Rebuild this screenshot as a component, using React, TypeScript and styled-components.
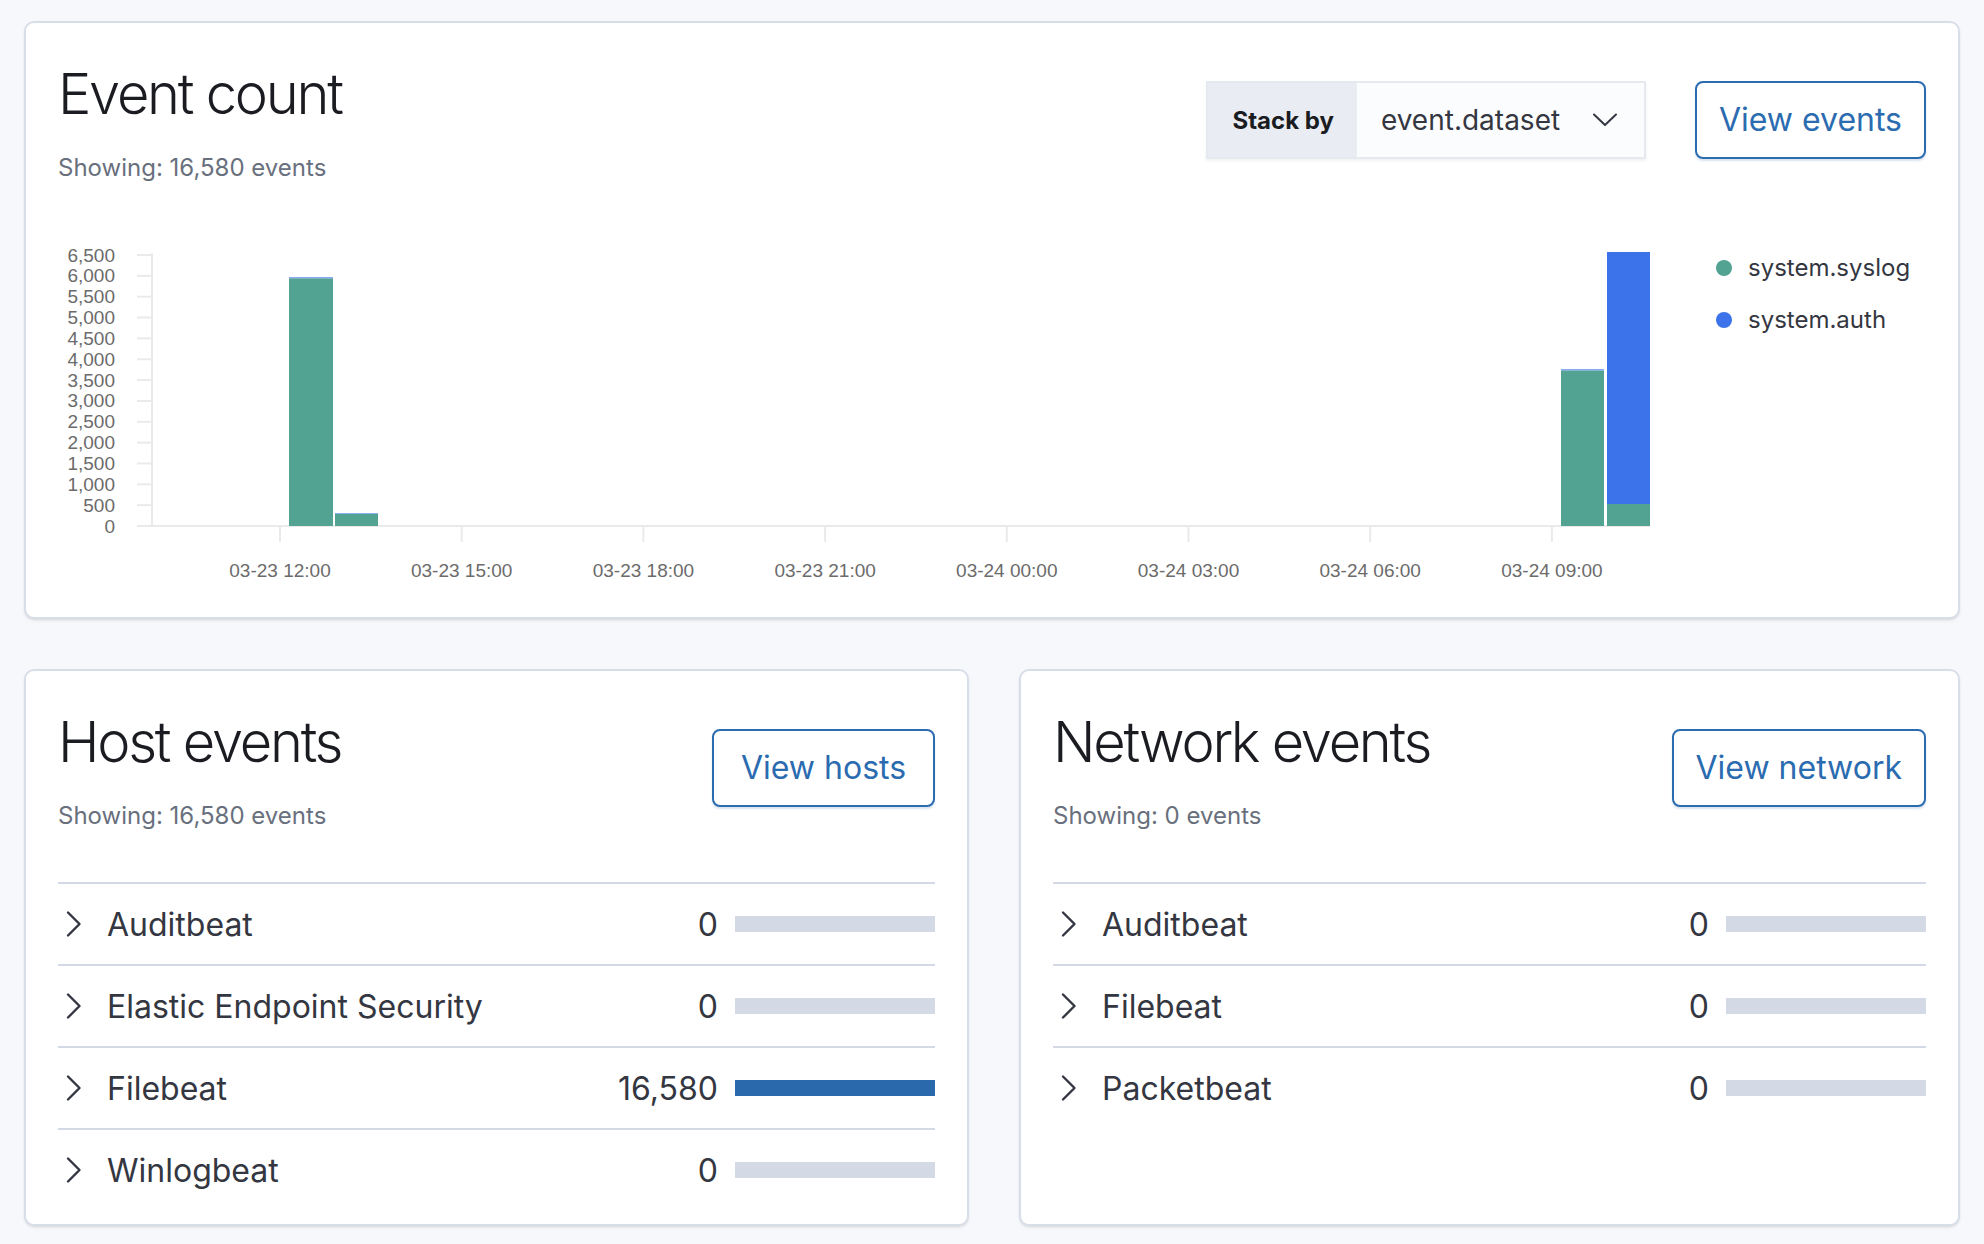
import React from "react";
import styled, { createGlobalStyle } from "styled-components";

const GlobalStyle = createGlobalStyle`
  html, body { margin: 0; padding: 0; background: #F7F8FC; }
  body { font-family: Inter, "Noto Sans", "Liberation Sans", sans-serif; color: #343741; }
  * { box-sizing: border-box; }
`;

const Page = styled.div`
  min-height: 1244px;
  padding: 21px 24px 0;
  display: flex;
  flex-direction: column;
  gap: 50px;
  background: #F7F8FC;
`;

const Panel = styled.section<{ $padBottom?: number }>`
  background: #fff;
  border: 2px solid #D8DEE8;
  border-radius: 10px;
  padding: 32px 32px ${(p) => (p.$padBottom ?? 32)}px;
  box-shadow: 0 2px 3px rgba(0, 0, 0, 0.07), 0 1px 1px rgba(0, 0, 0, 0.04);
  display: flex;
  flex-direction: column;
`;

const Header = styled.div`
  display: flex;
  justify-content: space-between;
  align-items: flex-start;
`;

const TitleBlock = styled.div`
  display: flex;
  flex-direction: column;
`;

const Title = styled.h2`
  margin: 3px 0 0;
  font-size: 56px;
  line-height: 72px;
  font-weight: 300;
  letter-spacing: -0.04em;
  color: #1A1C21;
`;

const Subtitle = styled.div`
  margin-top: 20px;
  font-size: 24px;
  line-height: 36px;
  color: #69707D;
`;

const Controls = styled.div`
  margin-top: 26px;
  display: flex;
  align-items: center;
  gap: 49px;
`;

const SelectGroup = styled.div`
  display: flex;
  height: 78px;
  border: 2px solid #E6E9F0;
  box-shadow: 0 2px 3px rgba(0, 0, 0, 0.06);
`;

const SelectLabel = styled.div`
  display: flex;
  align-items: center;
  padding: 0 23px 0 24px;
  background: #E9EDF3;
  font-size: 24px;
  font-weight: 700;
  color: #1A1C21;
`;

const SelectValue = styled.div`
  width: 287px;
  display: flex;
  align-items: center;
  justify-content: space-between;
  padding: 0 27px 0 24px;
  background: #FBFCFD;
  font-size: 28px;
  color: #343741;
`;

const LinkButton = styled.button`
  height: 78px;
  min-width: 223px;
  padding: 0 22px;
  border: 2px solid #2B6BB0;
  border-radius: 8px;
  background: #fff;
  color: #2B6BB0;
  font-family: Inter, "Noto Sans", sans-serif;
  font-size: 32px;
  line-height: 1;
  box-shadow: 0 2px 2px rgba(43, 107, 176, 0.18);
  cursor: pointer;
`;

const ChartRow = styled.div`
  display: flex;
  align-items: flex-start;
`;

const Legend = styled.ul`
  list-style: none;
  margin: 0 0 0 58px;
  padding: 64px 0 0;
  display: flex;
  flex-direction: column;
  gap: 16px;
`;

const LegendItem = styled.li`
  display: flex;
  align-items: center;
  gap: 16px;
  font-size: 24px;
  line-height: 36px;
  color: #343741;
`;

const Dot = styled.span<{ $color: string }>`
  width: 16px;
  height: 16px;
  border-radius: 50%;
  background: ${(p) => p.$color};
`;

const LowerRow = styled.div`
  display: grid;
  grid-template-columns: 945px 1fr;
  gap: 50px;
`;

const List = styled.div`
  margin-top: 48px;
  display: flex;
  flex-direction: column;
`;

const Row = styled.div`
  height: 82px;
  border-top: 2px solid #D3DAE6;
  display: flex;
  align-items: center;
`;

const Chevron = styled.span`
  width: 32px;
  height: 32px;
  display: flex;
  align-items: center;
  justify-content: center;
  margin-right: 17px;
`;

const RowName = styled.span`
  flex: 1;
  font-size: 32px;
  color: #343741;
`;

const RowCount = styled.span`
  font-size: 32px;
  color: #343741;
  margin-right: 17px;
`;

const Track = styled.div`
  width: 200px;
  height: 16px;
  background: #D3DAE6;
`;

const Fill = styled.div`
  height: 100%;
  background: #2A69AC;
`;

const TEAL = "#52A392";
const BLUE = "#3D73EA";

const BASE = 340;
const yPx = (v: number) => BASE - v * (271 / 6500);

const bars = [
  { x: 231, w: 44, syslog: 5940, auth: 32 },
  { x: 277, w: 43, syslog: 290, auth: 22 },
  { x: 1503, w: 43, syslog: 3730, auth: 36 },
  { x: 1549, w: 43, syslog: 528, auth: 6044 },
];

const xTicks = [
  "03-23 12:00",
  "03-23 15:00",
  "03-23 18:00",
  "03-23 21:00",
  "03-24 00:00",
  "03-24 03:00",
  "03-24 06:00",
  "03-24 09:00",
];

const yValues = Array.from({ length: 14 }, (_, i) => i * 500);

const EventChart: React.FC = () => (
  <svg width={1600} height={399} viewBox="0 0 1600 399">
    {yValues.map((v) => (
      <g key={v}>
        <line x1={79} x2={94} y1={yPx(v)} y2={yPx(v)} stroke="#EAEAEA" strokeWidth={2} />
        <text
          x={57}
          y={yPx(v)}
          textAnchor="end"
          dominantBaseline="central"
          fontFamily='"Liberation Sans", Arial, sans-serif'
          fontSize={19}
          fill="#6B6B6B"
        >
          {v.toLocaleString("en-US")}
        </text>
      </g>
    ))}
    <line x1={94} x2={94} y1={67} y2={BASE} stroke="#EAEAEA" strokeWidth={2} />
    <line x1={79} x2={1592} y1={BASE} y2={BASE} stroke="#EAEAEA" strokeWidth={2} />
    {xTicks.map((label, i) => {
      const x = 222 + i * 181.7;
      return (
        <g key={label}>
          <line x1={x} x2={x} y1={BASE} y2={BASE + 16} stroke="#EAEAEA" strokeWidth={2} />
          <text
            x={x}
            y={BASE + 51}
            textAnchor="middle"
            fontFamily='"Liberation Sans", Arial, sans-serif'
            fontSize={19}
            fill="#6B6B6B"
          >
            {label}
          </text>
        </g>
      );
    })}
    {bars.map((b, i) => {
      const sTop = yPx(b.syslog);
      const aTop = yPx(b.syslog + b.auth);
      return (
        <g key={i}>
          <rect x={b.x} y={sTop} width={b.w} height={BASE - sTop} fill={TEAL} />
          <rect x={b.x} y={aTop} width={b.w} height={sTop - aTop} fill={BLUE} opacity={b.auth < 100 ? 0.6 : 1} />
        </g>
      );
    })}
  </svg>
);

const RowChevron: React.FC = () => (
  <svg width={32} height={32} viewBox="0 0 32 32">
    <polyline points="10,4.5 21.5,16 10,27.5" fill="none" stroke="#343741" strokeWidth={2.4} strokeLinecap="round" strokeLinejoin="round" />
  </svg>
);

const SelectArrow: React.FC = () => (
  <svg width={24} height={14} viewBox="0 0 24 14">
    <polyline points="1,1.5 12,12 23,1.5" fill="none" stroke="#343741" strokeWidth={2} strokeLinecap="round" strokeLinejoin="round" />
  </svg>
);

type Item = { name: string; count: number };

const StatRow: React.FC<{ item: Item; max: number }> = ({ item, max }) => (
  <Row>
    <Chevron>
      <RowChevron />
    </Chevron>
    <RowName>{item.name}</RowName>
    <RowCount>{item.count.toLocaleString("en-US")}</RowCount>
    <Track>
      <Fill style={{ width: `${max > 0 ? (item.count / max) * 100 : 0}%` }} />
    </Track>
  </Row>
);

const hostItems: Item[] = [
  { name: "Auditbeat", count: 0 },
  { name: "Elastic Endpoint Security", count: 0 },
  { name: "Filebeat", count: 16580 },
  { name: "Winlogbeat", count: 0 },
];

const networkItems: Item[] = [
  { name: "Auditbeat", count: 0 },
  { name: "Filebeat", count: 0 },
  { name: "Packetbeat", count: 0 },
];

const StatPanel: React.FC<{ title: string; subtitle: string; action: string; items: Item[] }> = ({
  title,
  subtitle,
  action,
  items,
}) => {
  const max = Math.max(...items.map((i) => i.count));
  return (
    <Panel $padBottom={14}>
      <Header>
        <TitleBlock>
          <Title>{title}</Title>
          <Subtitle>{subtitle}</Subtitle>
        </TitleBlock>
        <Controls>
          <LinkButton>{action}</LinkButton>
        </Controls>
      </Header>
      <List>
        {items.map((it) => (
          <StatRow key={it.name} item={it} max={max} />
        ))}
      </List>
    </Panel>
  );
};

export default function App() {
  return (
    <>
      <GlobalStyle />
      <Page>
        <Panel>
          <Header>
            <TitleBlock>
              <Title>Event count</Title>
              <Subtitle>Showing: 16,580 events</Subtitle>
            </TitleBlock>
            <Controls>
              <SelectGroup>
                <SelectLabel>Stack by</SelectLabel>
                <SelectValue>
                  <span>event.dataset</span>
                  <SelectArrow />
                </SelectValue>
              </SelectGroup>
              <LinkButton>View events</LinkButton>
            </Controls>
          </Header>
          <ChartRow>
            <EventChart />
            <Legend>
              <LegendItem>
                <Dot $color={TEAL} />
                system.syslog
              </LegendItem>
              <LegendItem>
                <Dot $color={BLUE} />
                system.auth
              </LegendItem>
            </Legend>
          </ChartRow>
        </Panel>
        <LowerRow>
          <StatPanel title="Host events" subtitle="Showing: 16,580 events" action="View hosts" items={hostItems} />
          <StatPanel title="Network events" subtitle="Showing: 0 events" action="View network" items={networkItems} />
        </LowerRow>
      </Page>
    </>
  );
}
